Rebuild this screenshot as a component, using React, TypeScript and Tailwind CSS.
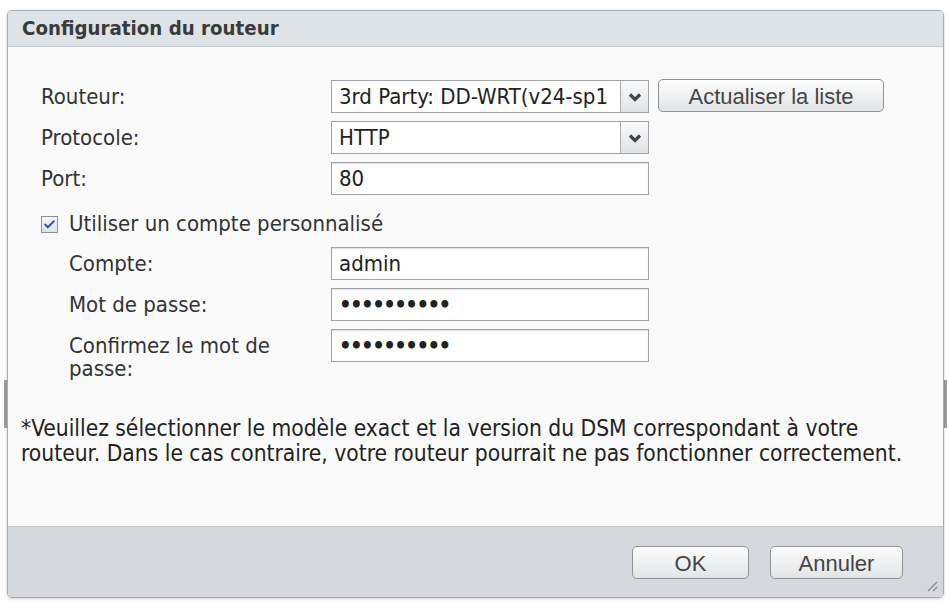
import { Check } from 'lucide-react'

const font = { fontFamily: '"DejaVu Sans Condensed", "DejaVu Sans", sans-serif' }
const btnFont = { fontFamily: '"Liberation Sans", Arial, sans-serif' }

function Select({ value }: { value: string }) {
  return (
    <div className="flex h-[33px] w-[318px] border border-[#9fa3a7] bg-white">
      <div className="flex-1 overflow-hidden whitespace-nowrap pl-[7px] leading-[31px] text-[#222]">{value}</div>
      <div className="flex w-[28px] items-center justify-center border-l border-[#a9adb1] bg-gradient-to-b from-[#f9f9f9] to-[#e1e4e7]">
        <svg width="14" height="10" viewBox="0 0 14 10">
          <path d="M2 2.5 L7 7.5 L12 2.5" fill="none" stroke="#3f444a" strokeWidth="3.2" />
        </svg>
      </div>
    </div>
  )
}

function Input({ value, password }: { value: string; password?: boolean }) {
  return (
    <div className="h-[33px] w-[318px] border border-[#9fa3a7] bg-white pl-[7px] leading-[31px] text-[#222] shadow-[inset_0_1px_1px_rgba(0,0,0,0.12)]">
      {password ? <span className="font-bold tracking-[-1.6px]">••••••••••</span> : value}
    </div>
  )
}

function Button({ label, w }: { label: string; w: string }) {
  return (
    <button
      className={`${w} h-[33px] rounded-[5px] border border-[#8e9297] bg-gradient-to-b from-[#fdfdfd] to-[#e2e4e6] text-[22px] text-[#444] shadow-[inset_0_1px_0_#fff]`}
      style={btnFont}
    >
      {label}
    </button>
  )
}

function Row({ label, indent, children }: { label: React.ReactNode; indent?: boolean; children: React.ReactNode }) {
  return (
    <div className="flex items-start">
      <div className={`${indent ? 'ml-[28px] w-[262px]' : 'w-[290px]'} pt-[5px] leading-[23px] text-[#333]`}>{label}</div>
      {children}
    </div>
  )
}

export default function App() {
  return (
    <div className="relative min-h-screen bg-white pl-[7px] pt-[10px] text-[22px]" style={font}>
      {/* window edges behind the dialog */}
      <div className="absolute left-[4px] top-[380px] h-[48px] w-[3px] bg-[#9a9ea2]" />
      <div className="absolute left-[944px] top-[380px] h-[48px] w-[3px] bg-[#9a9ea2]" />

      <div className="relative flex h-[588px] w-[937px] flex-col overflow-hidden rounded-[5px] border border-[#a7acb1] shadow-[0_1px_3px_rgba(0,0,0,0.2)]">
        {/* Header */}
        <div className="flex h-[36px] shrink-0 items-center border-b border-[#c3c8cd] bg-[#dee3e7] pl-[14px] text-[20.3px] font-bold text-[#3a3a3a]">
          Configuration du routeur
        </div>

        {/* Body */}
        <div className="flex flex-1 flex-col bg-[#fafafa] pl-[33px] pt-[33px]">
          <div className="flex flex-col gap-[8px]">
            <Row label="Routeur:">
              <Select value="3rd Party: DD-WRT(v24-sp1" />
              <div className="-mt-[1px] ml-[9px]">
                <Button label="Actualiser la liste" w="w-[226px]" />
              </div>
            </Row>
            <Row label="Protocole:">
              <Select value="HTTP" />
            </Row>
            <Row label="Port:">
              <Input value="80" />
            </Row>
          </div>

          <div className="mb-[11px] mt-[17px] flex items-center gap-[11px] text-[#333]">
            <div className="flex h-[17px] w-[17px] items-center justify-center border border-[#8a9096] bg-gradient-to-b from-[#f4f6f8] to-[#dfe3e7]">
              <Check className="h-[13px] w-[13px] text-[#2f4fc4]" strokeWidth={3.5} />
            </div>
            <span className="leading-[24px]">Utiliser un compte personnalisé</span>
          </div>

          <div className="flex flex-col gap-[8px]">
            <Row label="Compte:" indent>
              <Input value="admin" />
            </Row>
            <Row label="Mot de passe:" indent>
              <Input value="" password />
            </Row>
            <Row
              label={
                <>
                  Confirmez le mot de
                  <br />
                  passe:
                </>
              }
              indent
            >
              <Input value="" password />
            </Row>
          </div>

          <p className="-ml-[20px] mt-[36px] text-[22.6px] leading-[25px] text-[#222]">
            *Veuillez sélectionner le modèle exact et la version du DSM correspondant à votre
            <br />
            routeur. Dans le cas contraire, votre routeur pourrait ne pas fonctionner correctement.
          </p>
        </div>

        {/* Footer */}
        <div className="relative flex h-[71px] shrink-0 items-center justify-end gap-[21px] border-t border-[#c2c7cc] bg-[#d5d9dd] pr-[40px]">
          <Button label="OK" w="w-[117px]" />
          <Button label="Annuler" w="w-[133px]" />
          <svg className="absolute bottom-[5px] right-[5px]" width="13" height="13" viewBox="0 0 13 13">
            <path d="M12 3 L3 12 M12 8 L8 12" stroke="#8a8f94" strokeWidth="1.4" />
          </svg>
        </div>
      </div>
    </div>
  )
}
